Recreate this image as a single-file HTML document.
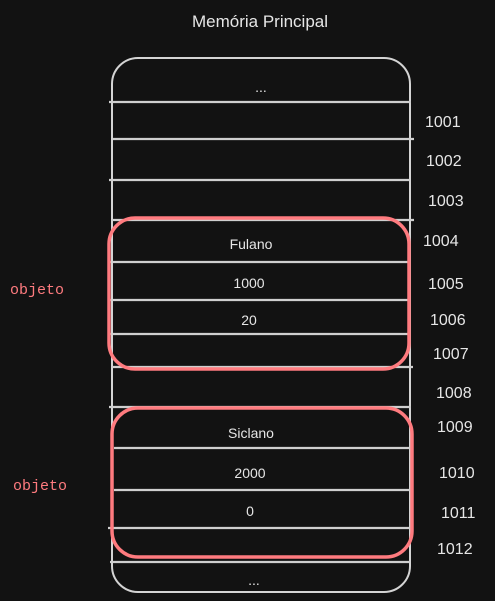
<!DOCTYPE html>
<html><head><style>
html,body{margin:0;padding:0;background:#121212;}
svg{display:block}
text{font-family:"Liberation Sans",sans-serif;fill:#e6e6e6;}
</style></head><body>
<svg width="495" height="601" viewBox="0 0 495 601">
<rect width="495" height="601" fill="#121212"/>
<text x="260" y="27" font-size="17" text-anchor="middle">Memória Principal</text>
<rect x="112" y="58" width="298" height="534" rx="26" fill="none" stroke="#d4d4d4" stroke-width="2"/>
<g stroke="#cfcfcf" stroke-width="2.2">
<line x1="109" y1="102" x2="411" y2="102"/>
<line x1="113" y1="139" x2="414" y2="139"/>
<line x1="109" y1="180" x2="410" y2="180"/>
<line x1="112" y1="220" x2="414" y2="220"/>
<line x1="110" y1="262" x2="410" y2="262"/>
<line x1="110" y1="300" x2="410" y2="300"/>
<line x1="108" y1="334" x2="410" y2="334"/>
<line x1="112" y1="367" x2="413" y2="367"/>
<line x1="109" y1="407" x2="411" y2="407"/>
<line x1="114" y1="448" x2="410" y2="448"/>
<line x1="114" y1="490" x2="410" y2="490"/>
<line x1="108" y1="528" x2="410" y2="528"/>
<line x1="110" y1="562" x2="410" y2="562"/>
</g>
<rect x="109" y="218" width="300" height="151" rx="26" fill="none" stroke="#ff7b7f" stroke-width="3.5"/>
<rect x="112" y="408" width="300" height="149" rx="26" fill="none" stroke="#ff7b7f" stroke-width="3.5"/>
<g font-size="14" text-anchor="middle">
<text x="261" y="92">...</text>
<text x="251" y="249">Fulano</text>
<text x="249" y="288">1000</text>
<text x="249" y="325">20</text>
<text x="251" y="438">Siclano</text>
<text x="250" y="478">2000</text>
<text x="250" y="516">0</text>
<text x="254" y="585">...</text>
</g>
<g font-size="16">
<text x="425" y="127">1001</text>
<text x="426" y="166">1002</text>
<text x="428" y="206">1003</text>
<text x="423" y="246">1004</text>
<text x="428" y="289">1005</text>
<text x="430" y="325">1006</text>
<text x="433" y="359">1007</text>
<text x="436" y="398">1008</text>
<text x="437" y="432">1009</text>
<text x="439" y="478">1010</text>
<text x="441" y="518">1011</text>
<text x="437" y="554">1012</text>
</g>
<g font-family="Liberation Mono" font-size="15">
<text x="10" y="294" style="font-family:'Liberation Mono',monospace;fill:#ff7b7f">objeto</text>
<text x="13" y="490" style="font-family:'Liberation Mono',monospace;fill:#ff7b7f">objeto</text>
</g>
</svg>
</body></html>
